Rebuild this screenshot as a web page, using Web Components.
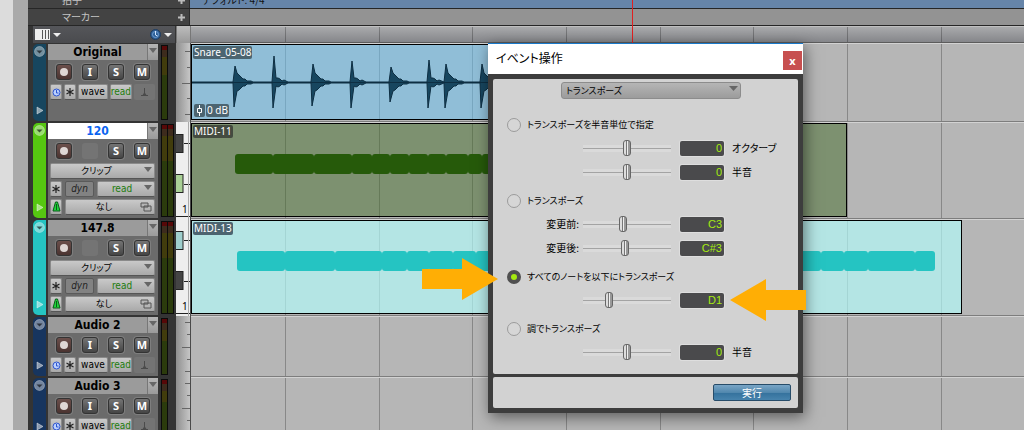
<!DOCTYPE html>
<html lang="ja">
<head>
<meta charset="utf-8">
<title>イベント操作</title>
<style>
html,body{margin:0;height:100%;overflow:hidden}
body{font-family:"Noto Sans","Noto Sans CJK JP",sans-serif;font-size:9px;color:#000;background:#dcdcdc}
</style>
</head>
<body>
<daw-app></daw-app>
<script>
const BASE = `*{box-sizing:border-box}
button,input,select{font:inherit;color:inherit;margin:0;padding:0;border:0;border-radius:0;appearance:none;background:none;outline:0}`;

function define(name, css, html) {
  customElements.define(name, class extends HTMLElement {
    constructor() {
      super();
      const root = this.attachShadow({mode: 'open'});
      const t = document.createElement('template');
      t.innerHTML = `<style>${BASE}${css}</style>${typeof html === 'function' ? html(this) : html}`;
      root.append(t.content.cloneNode(true));
    }
  });
}

/* bar lines of the timeline, one per measure */
const BARS = [94, 188, 281, 375, 469, 562, 656, 750, 843, 937, 1031, 1124, 1218, 1312];
define('bar-lines', `:host{position:absolute;inset:0;overflow:hidden;pointer-events:none}
svg{display:block;width:100%;height:100%}`,
  `<svg shape-rendering="crispEdges">${BARS.map(x => `<rect x="${x}" width="1" height="100%" fill="#000" fill-opacity=".25"/>`).join('')}</svg>`);

define('ruler-row', `:host{display:flex;height:17px;border-bottom:1px solid #262626;background:#434343;color:#c4c4c4;font-family:"Noto Sans CJK JP",sans-serif;font-size:10px}
:host([clipped]){height:9px;align-items:flex-end}
.head{flex:none;width:162px;height:16px;padding:0 4px 0 34px;display:flex;align-items:center;justify-content:space-between;border-right:1px solid #2c2c2c;line-height:16px;font-feature-settings:"palt"}
button{width:7px;height:16px;display:grid;place-items:center}
.lane{flex:1;height:16px;position:relative;background:var(--lane,#939393);padding-left:12px;line-height:16px;color:#111;font-feature-settings:"palt"}`,
  `<div class="head"><slot></slot><button aria-label="追加"><svg width="7" height="7"><path d="M3.500 0v7M0 3.500h7" stroke="#bbb" stroke-width="2"/></svg></button></div>
<div class="lane"><slot name="value"></slot></div>`);

define('view-bar', `:host{display:flex;height:17px}
.tools{flex:none;width:142px;margin-left:5px;height:17px;display:flex;align-items:center;gap:3px;padding:0 3px 0 2px;background:linear-gradient(#55565a,#4a4b4e)}
.grow{flex:1}
button{height:15px;display:grid;place-items:center}
.edge{width:15px;flex:none;margin-left:1px;border-left:1px solid #777;border-right:1px solid #777;background:linear-gradient(#bdbdbd,#999)}
.ruler{flex:1;position:relative;background:linear-gradient(#a9aaac,#85868a);border-top:1px solid #c0c0c0;border-bottom:1px solid #5c5c5c}`,
  `<div class="tools"><button aria-label="表示"><svg width="15" height="11"><path d="M0 0h15v11H0z" fill="#eee"/><path d="M7.500 1v9M10.500 1v9M13.500 1v9" stroke="#555" stroke-width="1"/></svg></button>
<svg width="8" height="4"><path d="M0 0h8L4 4z" fill="#eee"/></svg><span class="grow"></span>
<button aria-label="時間"><svg width="11" height="11"><circle cx="5.500" cy="5.500" r="5" fill="#2e5f96" stroke="#203c5e"/><circle cx="5.500" cy="5.500" r="3" fill="none" stroke="#6c9bd0"/><path d="M5.500 2v4l2 1" stroke="#cfe4ff" fill="none"/></svg></button>
<svg width="8" height="4"><path d="M0 0h8L4 4z" fill="#eee"/></svg></div><div class="edge"></div><div class="ruler"><bar-lines></bar-lines></div>`);

const flake = '<svg width="8" height="8"><path d="M4 0v8M.5 2l7 4M7.500 2l-7 4" stroke="#222" stroke-width="1.200"/></svg>';
const down = '<svg class="down" width="8" height="5"><path d="M0 0h8L4 5z" fill="#666"/></svg>';

/* control strip of one track */
define('track-head', `:host{display:flex;flex:none;width:148px;padding:1px 0;background:#343434;gap:2px;padding-left:5px}
.strip{width:13px;flex:none;background:var(--tint);border-radius:5px 0 0 5px;display:flex;flex-direction:column;align-items:center;justify-content:space-between;padding:1px 0 5px}
.strip button{height:12px;display:grid;place-items:center}
.panel{width:110px;flex:none;background:#6b6b6b;display:flex;flex-direction:column;gap:2px}
.name{display:flex;height:16px;background:#9b9b9b}
.name input{flex:1;min-width:0;text-align:center;font:bold 12px/16px "DejaVu Sans Condensed","Noto Sans",sans-serif;height:16px}
:host([selected]) .name input{background:#fff;color:#0a63f0}
.name button{width:11px;background:linear-gradient(#b5b5b5,#9a9a9a);border-left:1px solid #777;display:grid;place-items:start center;padding-top:4px}
.btns{display:grid;grid-template-columns:repeat(4,16px);gap:10px;padding:2px 0 2px 8px}
.btns button,.btns i{height:16px;border-radius:3px;box-shadow:0 0 0 1px #7e7e7e}
.btns button{background:linear-gradient(#747474,#454545);border:1px solid #333;color:#fff;font:bold 11px/14px "Noto Sans",sans-serif;text-align:center}
.btns button.rec{background:linear-gradient(#6b4f4b,#4a3330);display:grid;place-items:center}
.btns i{background:#747474;box-shadow:none}
.row{display:flex;gap:2px;padding:0 3px 0 2px;height:16px;font-family:"DejaVu Sans Condensed","Noto Sans CJK JP",sans-serif;font-size:10px}
.row>*{height:16px;border-radius:2px}
.b{background:linear-gradient(#c9c9c9,#a9a9a9);border:1px solid #8a8a8a;border-bottom-color:#555;display:flex;align-items:center;justify-content:center;line-height:12px;white-space:nowrap;position:relative}
.sq{width:12px;flex:none}.wave{width:31px}.read{width:22px;color:#1d7d0e}.dim{width:22px;background:#747474;display:grid;place-items:center}
.dyn{width:29px;flex:none;background:#828282;border:1px solid #5a5a5a;font-style:italic;text-align:center;line-height:12px;color:#222;margin:0 1px}
.fill{flex:1;padding-right:12px;font-feature-settings:"palt"}.ja{font-size:9px}.green{color:#1d7d0e;padding-right:8px}.gap{margin-left:1px}
.down{position:absolute;right:2px;top:3px}.wins{position:absolute;right:2px;top:2px}
.meter{display:flex;gap:1px;margin:1px;background:#0b0b0b;padding:1px;align-self:stretch}
.meter b{width:5px;background:linear-gradient(#560808 0 4px,#3d2b1d 4px 11px,#413c0c 11px 40%,#2b3b0c 40%)}`,
  el => {
    const midi = el.getAttribute('kind') === 'midi';
    const name = el.getAttribute('name');
    return `<div class="strip"><button aria-label="展開"><svg width="11" height="11"><circle cx="5.500" cy="5.500" r="5" fill="#fff" fill-opacity=".4" stroke="#fff" stroke-opacity=".3"/><path d="M2.500 4.500h6l-3 3z" fill="#000" fill-opacity=".6"/></svg></button>
<button aria-label="サブトラック"><svg width="8" height="9"><path d="M1 1v7l6-3.500z" fill="#fff" fill-opacity=".5" stroke="#fff" stroke-opacity=".4"/></svg></button></div>
<div class="panel"><div class="name"><input aria-label="トラック名" value="${name}"><button aria-label="メニュー"><svg width="8" height="5"><path d="M0 0h8L4 5z" fill="#666"/></svg></button></div>
<div class="btns"><button class="rec" aria-label="録音"><svg width="10" height="10"><circle cx="5" cy="5" r="4" fill="#ded6d4"/></svg></button>${midi ? '<i></i>' : '<button>I</button>'}<button>S</button><button>M</button></div>
${midi ? `<div class="row"><button class="b fill ja">クリップ${down}</button></div>
<div class="row"><button class="b sq" aria-label="フリーズ">${flake}</button><button class="dyn">dyn</button><button class="b fill green">read${down}</button></div>
<div class="row"><button class="b sq" aria-label="メトロノーム"><svg width="9" height="12"><path d="M3.500 1h2l2.500 9H1z" fill="#1ed33a" stroke="#0b5c1b"/><path d="M4.500 3v6" stroke="#0b5c1b"/></svg></button><button class="b fill ja gap">なし<svg class="wins" width="12" height="10"><path d="M1 1h7v4H1zM4 4h7v5H4z" fill="#b5b5b5" stroke="#555"/></svg></button></div>`
  : `<div class="row"><button class="b sq" aria-label="タイム"><svg width="9" height="9"><circle cx="4.500" cy="4.500" r="3.500" fill="#bcd2ff" stroke="#2e55d0"/><path d="M4.500 2v3h2" stroke="#2e55d0" fill="none"/></svg></button><button class="b sq" aria-label="フリーズ">${flake}</button><button class="b wave">wave</button><button class="b read">read</button><span class="dim"><svg width="9" height="10"><path d="M4.500 1v7M1 8.500h7" stroke="#4b4b4b" fill="none"/><path d="M2 9l2.500-4L7 9z" fill="#4b4b4b"/></svg></span></div>`}</div>
<div class="meter"><b></b>${midi ? '<b></b>' : ''}</div>`;
  });

/* amplitude scale for audio, keyboard for MIDI */
define('track-scale', `:host{display:block;flex:none;width:15px;background:linear-gradient(90deg,#8f8f8f,#c6c6c6);border-right:1px solid #4a4a4a}
:host([kind=midi]){background:#eee}
svg{display:block;width:14px;height:100%;overflow:hidden}
text{font:10px "Noto Sans",sans-serif}`,
  el => {
    if (el.getAttribute('kind') !== 'midi') {
      const h = +el.getAttribute('span');
      return `<svg shape-rendering="crispEdges">${[.1, .3, .5, .7, .9].map((p, i) => `<rect x="${i === 2 ? 6 : i % 2 ? 11 : 9}" y="${Math.round(h * p)}" width="${i === 2 ? 8 : i % 2 ? 3 : 5}" height="1" fill="#666"/>`).join('')}</svg>`;
    }
    const [a, b] = el.getAttribute('keys').split(',');
    return `<svg><rect x="-2" y="12.500" width="9" height="18" fill="${a}" stroke="#222"/><path d="M8 21.500h6M8 62.500h6M0 94.500h14" stroke="#222"/><rect x="-2" y="52.500" width="9" height="18" fill="${b}" stroke="#222"/><path d="M12.500 0v97" stroke="#aaa"/><text x="6" y="91">1</text></svg>`;
  });

/* mirrored drum-hit envelope: [x, height above, height below] */
function wavePath() {
  const hits = [[42,16,25],[81,26,26],[120,18,24],[159,21,26],[198,15,20],[236,22,26],[253,18,26],[289,18,26],[328,20,26],[366,24,25],[405,18,24]];
  let up = 'M0 37', lo = '';
  hits.forEach(([x, u, d], n) => {
    const fat = [0, 2, 4, 6, 7, 10].includes(n) ? 9 : 4;
    const next = hits[n + 1] ? hits[n + 1][0] - x : 40;
    up += `L${x - 1} 37L${x + 1} ${37 - u}L${x + 3} ${37 - fat}`;
    let back = `L${x - 1} 38L${x} ${37 + d}L${x + 3} ${37 + fat}`;
    for (let i = 5; i < next - 4; i += 2) {
      const a = i > 26 ? 0 : Math.round(fat * Math.exp(-(i - 3) / 5) + (i < 12 && i % 3 ? 1 : 0));
      up += `L${x + i} ${37 - a}`;
      back += `L${x + i} ${38 + a}`;
    }
    lo += back;
  });
  return `${up}L508 37M0 38${lo}L508 38`;
}
define('wave-form', `:host{position:absolute;inset:0;overflow:hidden}svg{display:block;width:508px;height:76px}`,
  `<svg><path d="${wavePath()}" fill="#17465f" stroke="#0d2e42" stroke-width="1" stroke-linejoin="round"/><path d="M0 37.500h508" stroke="#0d2e42"/></svg>`);

/* notes given as the list of their boundaries */
define('note-run', `:host{position:absolute;inset:0;overflow:hidden}svg{display:block;width:100%;height:100%}`,
  el => {
    const p = el.getAttribute('edges').split(',').map(Number);
    return `<svg>${p.slice(1).map((x, i) => `<rect x="${p[i]}" y="30" width="${x - p[i]}" height="20" rx="3" fill="${el.getAttribute('fill')}"/>`).join('')}</svg>`;
  });

define('track-clip', `:host{display:block;position:relative;border:1px solid #000;overflow:hidden;background:var(--clip);color:#fff}
.tag{position:absolute;left:1px;top:1px;height:13px;padding:0 1px;border-radius:2px;background:var(--tag,#4c6470);font:10px/13px "Noto Sans",sans-serif}
.gain{position:absolute;left:2px;bottom:2px;display:flex;gap:1px;font:10px/13px "Noto Sans",sans-serif}
.gain>*{height:13px;background:var(--tag,#4c6470);border-radius:2px;padding:0 1px}`,
  el => `<slot></slot><span class="tag">${el.getAttribute('name')}</span>${el.hasAttribute('gain') ? `<div class="gain"><svg width="11" height="13"><path d="M4.500 1v3M4.500 9v3M2.500 4.500h4v4h-4z" stroke="#fff" fill="none"/></svg><span>${el.getAttribute('gain')}</span></div>` : ''}`);

define('daw-track', `:host{display:flex;flex:none;height:var(--h)}
.lane{flex:1;min-width:0;position:relative;display:flex;background:#b6b6b6;border-top:1px solid #d2d2d2;border-bottom:1px solid #7d7d7d;padding-bottom:1px}`,
  '<slot name="head"></slot><slot name="scale"></slot><div class="lane"><bar-lines></bar-lines><slot></slot></div>');

define('param-row', `:host{display:grid;grid-template-columns:76px 88px 53px 1fr;height:24px;align-items:center;font-feature-settings:"palt";font-size:10px;font-family:"Noto Sans CJK JP",sans-serif}
label{text-align:right;padding-right:4px;line-height:16px}
input[type=range]{width:88px;height:16px;background:linear-gradient(#a3a3a3,#a3a3a3) center/100% 1px no-repeat,linear-gradient(#dadada,#dadada) center/100% 7px no-repeat}
input::-webkit-slider-thumb{appearance:none;width:8px;height:16px;border:1px solid #666;border-radius:3px;background:linear-gradient(90deg,#ddd 0 2px,#777 2px 3px,#eee 3px 4px,#999 4px)}
input[type=text]{margin-left:9px;width:44px;height:15px;background:#4a4a4c;color:#a5ea10;border-radius:2px;text-align:right;padding-right:2px;font:11px/15px "Liberation Sans",sans-serif;box-shadow:0 0 0 1px #dedede}
span{padding-left:8px;line-height:16px;white-space:nowrap}`,
  el => {
    const l = el.getAttribute('label') || '', v = el.getAttribute('value');
    return `<label for="r">${l}</label><input id="r" type="range" min="0" max="80" value="${el.getAttribute('pos')}" aria-label="${l || '値'}"><input type="text" value="${v}" aria-label="数値"><span>${el.getAttribute('unit') || ''}</span>`;
  });

define('option-group', `:host{display:block}
label{display:flex;align-items:center;gap:6px;height:22px;font:9px/16px "Noto Sans CJK JP",sans-serif;font-feature-settings:"palt";white-space:nowrap}
input{width:14px;height:14px;border:1px solid #9b9b9b;border-radius:50%;background:#d6d6d6;flex:none}
input:checked{border:4px solid #505050;background:#a5ea10}`,
  el => `<label><input type="radio" ${el.hasAttribute('checked') ? 'checked' : ''}>${el.getAttribute('label')}</label><slot></slot>`);

define('event-dialog', `:host{display:flex;flex-direction:column;width:315px;background:#3d3d3d;box-shadow:2px 4px 14px rgba(0,0,0,.5)}
header{display:flex;justify-content:space-between;height:31px;background:#fff;border-top:1px solid #1979ca;padding:0 1px 0 8px}
h1{margin:0;font:12px/28px "Noto Sans CJK JP",sans-serif;font-feature-settings:"palt"}
header button{margin-top:7px;width:19px;height:19px;background:#c75050;color:#fff;font:bold 11px/17px "Noto Sans",sans-serif}
main,footer{background:#d2d2d2;border-radius:2px;margin:0 5px}
main{margin-top:5px;padding:3px 14px 10px;display:flex;flex-direction:column;gap:6px}
.pick{position:relative;width:180px;margin:0 0 10px 54px;height:16px}
select{display:block;width:180px;height:17px;border:1px solid #8c8c8c;border-radius:3px;background:linear-gradient(#b5b5b5,#9c9c9c);padding:0 4px;font:9px/15px "Noto Sans CJK JP",sans-serif;font-feature-settings:"palt"}
.pick svg{position:absolute;right:3px;top:4px}
footer{margin-top:3px;margin-bottom:5px;height:31px;display:flex;align-items:center;justify-content:flex-end;padding-right:7px}
footer button{width:78px;height:17px;border:1px solid #274c69;border-radius:2px;background:linear-gradient(#79a5c6,#5288ae 50%,#34719c 51%,#4783ad);color:#fff;font:10px/14px "Noto Sans CJK JP",sans-serif}`,
  `<header><h1>イベント操作</h1><button aria-label="閉じる">x</button></header>
<main><div class="pick"><select aria-label="操作"><option>トランスポーズ</option></select><svg width="9" height="5"><path d="M0 0h9L4.500 5z" fill="#666"/></svg></div>
<option-group label="トランスポーズを半音単位で指定"><param-row value="0" pos="40" unit="オクターブ"></param-row><param-row value="0" pos="40" unit="半音"></param-row></option-group>
<option-group label="トランスポーズ"><param-row label="変更前:" value="C3" pos="36"></param-row><param-row label="変更後:" value="C#3" pos="38"></param-row></option-group>
<option-group label="すべてのノートを以下にトランスポーズ" checked><param-row value="D1" pos="22"></param-row></option-group>
<option-group label="調でトランスポーズ"><param-row value="0" pos="40" unit="半音"></param-row></option-group></main>
<footer><button>実行</button></footer>`);

define('callout-arrow', `:host{display:block;width:76px;height:42px}:host([left]) svg{transform:scaleX(-1)}svg{display:block}`,
  '<svg width="76" height="42"><path d="M0 11h40V0l36 21-36 21V31H0z" fill="#ffae05"/></svg>');

define('daw-app', `:host{display:flex;height:100%;overflow:hidden}
.page{width:13px;flex:none;background:#dcdcdc}.gutter{width:15px;flex:none;background:#aaa}
.work{flex:1;min-width:0;position:relative;background:#343434;display:flex;flex-direction:column}
view-bar,ruler-row,daw-track{flex:none}
event-dialog{position:absolute;left:460px;top:43px}
.head{position:absolute;left:604px;top:0;width:1px;height:43px;background:#e02020}
.a1,.a2{position:absolute;left:394px;top:258px}.a2{left:702px;top:279px}`,
  () => {
    const audio = (name, h, tint, clip = '') => `<daw-track style="--h:${h}px"><track-head slot="head" kind="audio" name="${name}" style="--tint:${tint}"></track-head><track-scale slot="scale" kind="audio" span="${h}"></track-scale>${clip}</daw-track>`;
    const midi = (name, tint, keys, extra, clip) => `<daw-track style="--h:97px"><track-head slot="head" kind="midi" name="${name}" ${extra} style="--tint:${tint}"></track-head><track-scale slot="scale" kind="midi" keys="${keys}"></track-scale>${clip}</daw-track>`;
    return `<div class="page"></div><div class="gutter"></div><div class="work">
<ruler-row clipped style="--lane:#6685a9">拍子<span slot="value">デフォルト: 4/4</span></ruler-row>
<ruler-row>マーカー</ruler-row>
<view-bar></view-bar>
${audio('Original', 79, '#17465f', '<track-clip name="Snare_05-08" gain="0 dB" style="--clip:rgba(105,197,247,.5);width:510px"><wave-form></wave-form></track-clip>')}
${midi('120', '#56c611', '#444,#a9d096', 'selected', '<track-clip name="MIDI-11" style="--clip:rgba(67,107,41,.5);--tag:#444b40;width:656px"><note-run fill="#265a0a" edges="43,81,122,160,180,198,217,236,254,276,290,312,330,350,372,400,430,460,500"></note-run></track-clip>')}
${midi('147.8', '#25c4c2', '#9fcfcd,#444', '', '<track-clip name="MIDI-13" style="--clip:rgba(179,255,253,.65);width:771px"><note-run fill="#25c4c2" edges="45,93,143,190,215,237,261,284,310,340,370,400,430,460,490,520,550,580,606,629,652,676,723,743"></note-run></track-clip>')}
${audio('Audio 2', 61, '#17355f')}
${audio('Audio 3', 61, '#17355f')}
<div class="head"></div><event-dialog></event-dialog><callout-arrow class="a1"></callout-arrow><callout-arrow class="a2" left></callout-arrow></div>`;
  });
</script>
</body>
</html>
